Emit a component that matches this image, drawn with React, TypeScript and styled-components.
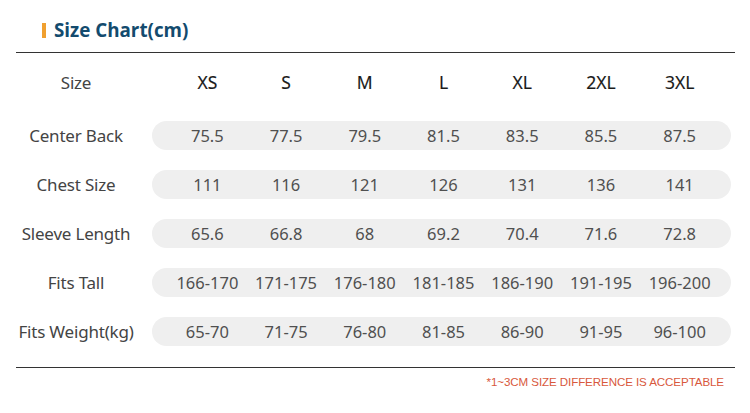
import React from "react";
import styled, { createGlobalStyle } from "styled-components";

const Global = createGlobalStyle`
  html, body { margin: 0; padding: 0; background: #ffffff; }
  body { font-family: "Noto Sans CJK SC", "Noto Sans", sans-serif; }
`;

const Page = styled.div`
  width: 750px;
  height: 413px;
  background: #fff;
  display: flex;
  flex-direction: column;
  overflow: hidden;
`;

const TitleBar = styled.div`
  display: flex;
  align-items: center;
  height: 38px;
  margin-top: 11px;
  padding-left: 42px;
  gap: 8px;
`;

const Accent = styled.span`
  display: block;
  width: 4px;
  height: 15px;
  background: #f0a030;
`;

const Title = styled.h1`
  margin: 0;
  font-family: "Open Sans", "Noto Sans", sans-serif;
  font-weight: 700;
  font-size: 18.8px;
  color: #134b6e;
`;

const Rule = styled.hr<{ $top: number }>`
  margin: ${(p) => p.$top}px 15px 0 16px;
  border: none;
  border-top: 1.5px solid #333;
  height: 0;
`;

const Row = styled.div<{ $h: number }>`
  display: flex;
  align-items: center;
  height: ${(p) => p.$h}px;
`;

const Label = styled.div`
  width: 152px;
  text-align: center;
  font-family: "Noto Sans", "Noto Sans CJK SC", sans-serif;
  font-weight: 400;
  font-size: 17px;
  letter-spacing: -0.2px;
  color: #444;
  white-space: nowrap;
`;

const Cells = styled.div<{ $pill?: boolean }>`
  width: 579px;
  height: 29px;
  box-sizing: border-box;
  padding: 0 12px 0 16px;
  display: grid;
  grid-template-columns: repeat(7, 1fr);
  align-items: center;
  border-radius: 15px;
  background: ${(p) => (p.$pill ? "#efefef" : "transparent")};
`;

const Cell = styled.div<{ $head?: boolean }>`
  text-align: center;
  font-family: "Noto Sans", "Noto Sans CJK SC", sans-serif;
  font-size: ${(p) => (p.$head ? "17.5px" : "16.5px")};
  font-weight: 400;
  -webkit-text-stroke: ${(p) => (p.$head ? "0.15px #1a1a1a" : "0")};
  color: ${(p) => (p.$head ? "#1a1a1a" : "#505050")};
  white-space: nowrap;
`;

const Note = styled.div`
  margin-top: 7px;
  padding-right: 26px;
  text-align: right;
  font-family: "Liberation Sans", Arial, sans-serif;
  font-size: 11.6px;
  letter-spacing: -0.1px;
  color: #d8583c;
`;

const sizes = ["XS", "S", "M", "L", "XL", "2XL", "3XL"];
const rows: [string, string[]][] = [
  ["Center Back", ["75.5", "77.5", "79.5", "81.5", "83.5", "85.5", "87.5"]],
  ["Chest Size", ["111", "116", "121", "126", "131", "136", "141"]],
  ["Sleeve Length", ["65.6", "66.8", "68", "69.2", "70.4", "71.6", "72.8"]],
  ["Fits Tall", ["166-170", "171-175", "176-180", "181-185", "186-190", "191-195", "196-200"]],
  ["Fits Weight(kg)", ["65-70", "71-75", "76-80", "81-85", "86-90", "91-95", "96-100"]],
];

export default function App() {
  return (
    <Page>
      <Global />
      <TitleBar>
        <Accent />
        <Title>Size Chart(cm)</Title>
      </TitleBar>
      <Rule $top={3} />
      <Row $h={58}>
        <Label>Size</Label>
        <Cells>
          {sizes.map((s) => (
            <Cell key={s} $head>
              {s}
            </Cell>
          ))}
        </Cells>
      </Row>
      {rows.map(([label, vals]) => (
        <Row key={label} $h={49}>
          <Label>{label}</Label>
          <Cells $pill>
            {vals.map((v, i) => (
              <Cell key={i}>{v}</Cell>
            ))}
          </Cells>
        </Row>
      ))}
      <Rule $top={11} />
      <Note>*1~3CM SIZE DIFFERENCE IS ACCEPTABLE</Note>
    </Page>
  );
}
